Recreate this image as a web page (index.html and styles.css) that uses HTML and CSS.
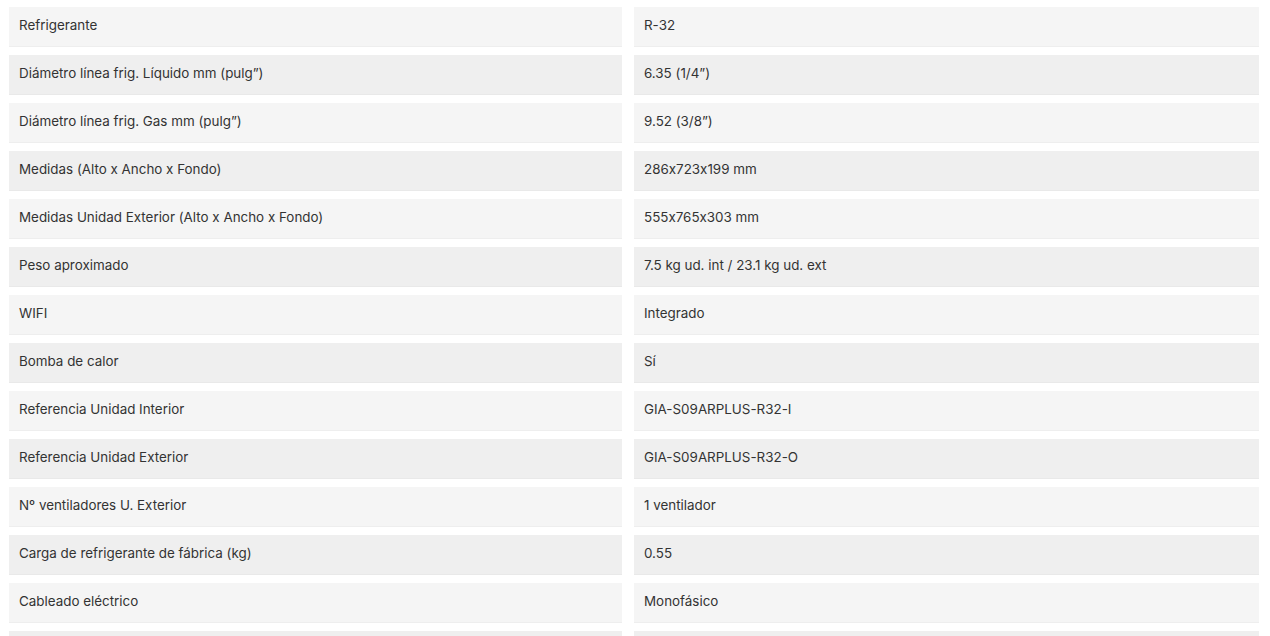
FILE: index.html
```html
<!DOCTYPE html>
<html lang="es">
<head>
<meta charset="utf-8">
<link rel="stylesheet" href="styles.css">
</head>
<body>
<div class="specs">
  <div class="cell">Refrigerante</div><div class="cell">R-32</div>
  <div class="cell">Diámetro línea frig. Líquido mm (pulg”)</div><div class="cell">6.35 (1/4”)</div>
  <div class="cell">Diámetro línea frig. Gas mm (pulg”)</div><div class="cell">9.52 (3/8”)</div>
  <div class="cell">Medidas (Alto x Ancho x Fondo)</div><div class="cell">286x723x199 mm</div>
  <div class="cell">Medidas Unidad Exterior (Alto x Ancho x Fondo)</div><div class="cell">555x765x303 mm</div>
  <div class="cell">Peso aproximado</div><div class="cell">7.5 kg ud. int / 23.1 kg ud. ext</div>
  <div class="cell">WIFI</div><div class="cell">Integrado</div>
  <div class="cell">Bomba de calor</div><div class="cell">Sí</div>
  <div class="cell">Referencia Unidad Interior</div><div class="cell">GIA-S09ARPLUS-R32-I</div>
  <div class="cell">Referencia Unidad Exterior</div><div class="cell">GIA-S09ARPLUS-R32-O</div>
  <div class="cell">Nº ventiladores U. Exterior</div><div class="cell">1 ventilador</div>
  <div class="cell">Carga de refrigerante de fábrica (kg)</div><div class="cell">0.55</div>
  <div class="cell">Cableado eléctrico</div><div class="cell">Monofásico</div>
  <div class="cell"></div><div class="cell"></div>
</div>
</body>
</html>
```
FILE: styles.css
```css
html, body {
  margin: 0;
  padding: 0;
  background: #ffffff;
}
body {
  font-family: "Inter", "Liberation Sans", sans-serif;
  font-size: 13.4px;
  color: #333333;
  font-feature-settings: "calt" 0;
  height: 636px;
  overflow: hidden;
}
.specs {
  display: grid;
  grid-template-columns: 613px 625px;
  column-gap: 12px;
  row-gap: 8px;
  padding: 7px 0 0 9px;
}
.cell {
  height: 40px;
  box-sizing: border-box;
  padding: 0 10px 2px;
  display: flex;
  align-items: center;
  background: #f5f5f5;
  border-bottom: 1px solid #eeeeee;
  line-height: 1;
}
.cell:nth-child(4n+3),
.cell:nth-child(4n+4) {
  background: #efefef;
  border-bottom-color: #e9e9e9;
}
```
